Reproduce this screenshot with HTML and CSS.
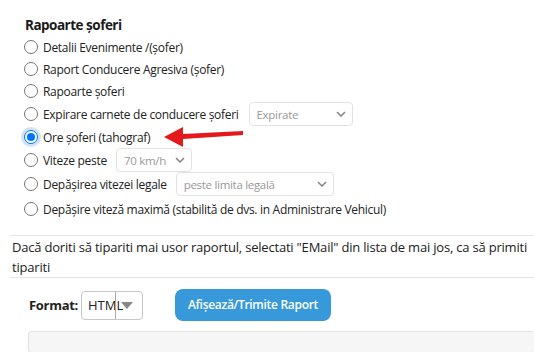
FILE: index.html
```html
<!DOCTYPE html>
<html lang="ro">
<head>
<meta charset="utf-8">
<title>Rapoarte şoferi</title>
<link rel="stylesheet" href="styles.css">
</head>
<body>
<div class="page">
  <div class="section">
    <div class="title">Rapoarte şoferi</div>
    <label class="row"><span class="radio"></span><span>Detalii Evenimente /(şofer)</span></label>
    <label class="row"><span class="radio"></span><span>Raport Conducere Agresiva (şofer)</span></label>
    <label class="row"><span class="radio"></span><span>Rapoarte şoferi</span></label>
    <label class="row tall"><span class="radio"></span><span>Expirare carnete de conducere şoferi</span>
      <span class="sel sel-exp">Expirate<svg class="chev" viewBox="0 0 10 6" width="10" height="6"><path d="M1 1l4 4 4-4" fill="none" stroke="#888" stroke-width="1.6"/></svg></span></label>
    <label class="row"><span class="radio checked"></span><span>Ore şoferi (tahograf)</span></label>
    <label class="row tall"><span class="radio"></span><span>Viteze peste</span>
      <span class="sel sel-speed">70 km/h<svg class="chev" viewBox="0 0 10 6" width="10" height="6"><path d="M1 1l4 4 4-4" fill="none" stroke="#888" stroke-width="1.6"/></svg></span></label>
    <label class="row tall"><span class="radio"></span><span>Depăşirea vitezei legale</span>
      <span class="sel sel-legal">peste limita legală<svg class="chev" viewBox="0 0 10 6" width="10" height="6"><path d="M1 1l4 4 4-4" fill="none" stroke="#888" stroke-width="1.6"/></svg></span></label>
    <label class="row last"><span class="radio"></span><span>Depăşire viteză maximă (stabilită de dvs. in Administrare Vehicul)</span></label>
    <svg class="arrow" width="90" height="24" viewBox="0 0 90 24"><polygon points="0,13 19,3 19,10 79,7 79,11 19,15 19,23" fill="#e3191b"/></svg>
  </div>
  <div class="note">Dacă doriti să tipariti mai usor raportul, selectati "EMail" din lista de mai jos, ca să primiti<br>tipariti</div>
  <div class="actions">
    <span class="flabel">Format:</span>
    <span class="fsel"><span class="fval">HTML</span><span class="fbtn"><span class="tri"></span></span></span>
    <button class="btn">Afişează/Trimite Raport</button>
  </div>
  <div class="bar"></div>
</div>
</body>
</html>
```

FILE: styles.css
```css
html, body { margin: 0; padding: 0; overflow: hidden; background: #fff; }
body {
  font-family: "Open Sans", "Noto Sans", "Liberation Sans", sans-serif;
  font-size: 12px;
  letter-spacing: -0.3px;
  color: #222;
  width: 534px;
  height: 352px;
}
.page { padding-left: 10px; }
.section { position: relative; padding: 14px 0 13px 14px; border-bottom: 1px solid #e6e6e6; }
.title { font-weight: 700; font-size: 13.5px; letter-spacing: -0.5px; line-height: 22px; height: 22px; color: #1a1a1a; padding-left: 1px; }
.row { display: flex; align-items: center; height: 22px; gap: 5px; white-space: nowrap; }
.row.tall { height: 24px; }
.row.last { height: 26px; }
.radio {
  width: 14px; height: 14px; border: 1px solid #767676; border-radius: 50%;
  box-sizing: border-box; flex: none; background: #fff; position: relative;
}
.radio.checked { border-color: #0075ff; background: #fff; box-shadow: 0 0 0 3px #cfe4f7; }
.radio.checked::after {
  content: ""; position: absolute; left: 2px; top: 2px; width: 8px; height: 8px;
  border-radius: 50%; background: #0075ff;
}
.sel {
  display: inline-flex; align-items: center; justify-content: space-between;
  box-sizing: border-box; height: 24px; border: 1px solid #e2e2e2; border-radius: 4px;
  color: #999; font-size: 11.5px; padding: 0 6px 0 7px; margin-left: 5px;
}
.sel-exp { width: 104px; }
.sel-speed { width: 76px; margin-left: 4px; }
.sel-legal { width: 158px; margin-left: 4px; }
.chev { flex: none; }
.arrow { position: absolute; left: 154px; top: 124px; }
.note {
  font-size: 13px; letter-spacing: -0.2px; line-height: 20px; color: #222; padding: 1px 0 0 2px;
  border-bottom: 1px solid #e6e6e6; white-space: nowrap; overflow: hidden; height: 40px;
}
.actions { display: flex; align-items: center; height: 53px; padding-left: 19px; }
.flabel { font-weight: 700; font-size: 13px; letter-spacing: -0.3px; margin-right: 3px; }
.fsel {
  display: inline-flex; align-items: stretch; box-sizing: border-box; width: 62px; height: 29px;
  border: 1px solid #c8c8c8; border-radius: 4px; position: relative; margin-top: 1px;
}
.fval { font-size: 13px; letter-spacing: 0; color: #222; padding-left: 6px; line-height: 27px; width: 27px; }
.fbtn { border-left: 1px solid #aaa; display: flex; align-items: center; padding-left: 5px; }
.tri { width: 0; height: 0; border-left: 6px solid transparent; border-right: 6px solid transparent; border-top: 7px solid #888; }
.btn {
  margin-left: 32px; height: 32px; width: 156px; border: none; border-radius: 8px;
  background: #3799da; color: #fff; font-family: inherit; font-size: 12px; font-weight: 600;
  letter-spacing: -0.3px; white-space: nowrap; padding: 0;
}
.bar {
  margin-left: 18px; height: 22px; box-sizing: border-box; border: 1px solid #e2e2e2;
  border-radius: 4px; background: #f6f6f6; border-right: none;
}
```
